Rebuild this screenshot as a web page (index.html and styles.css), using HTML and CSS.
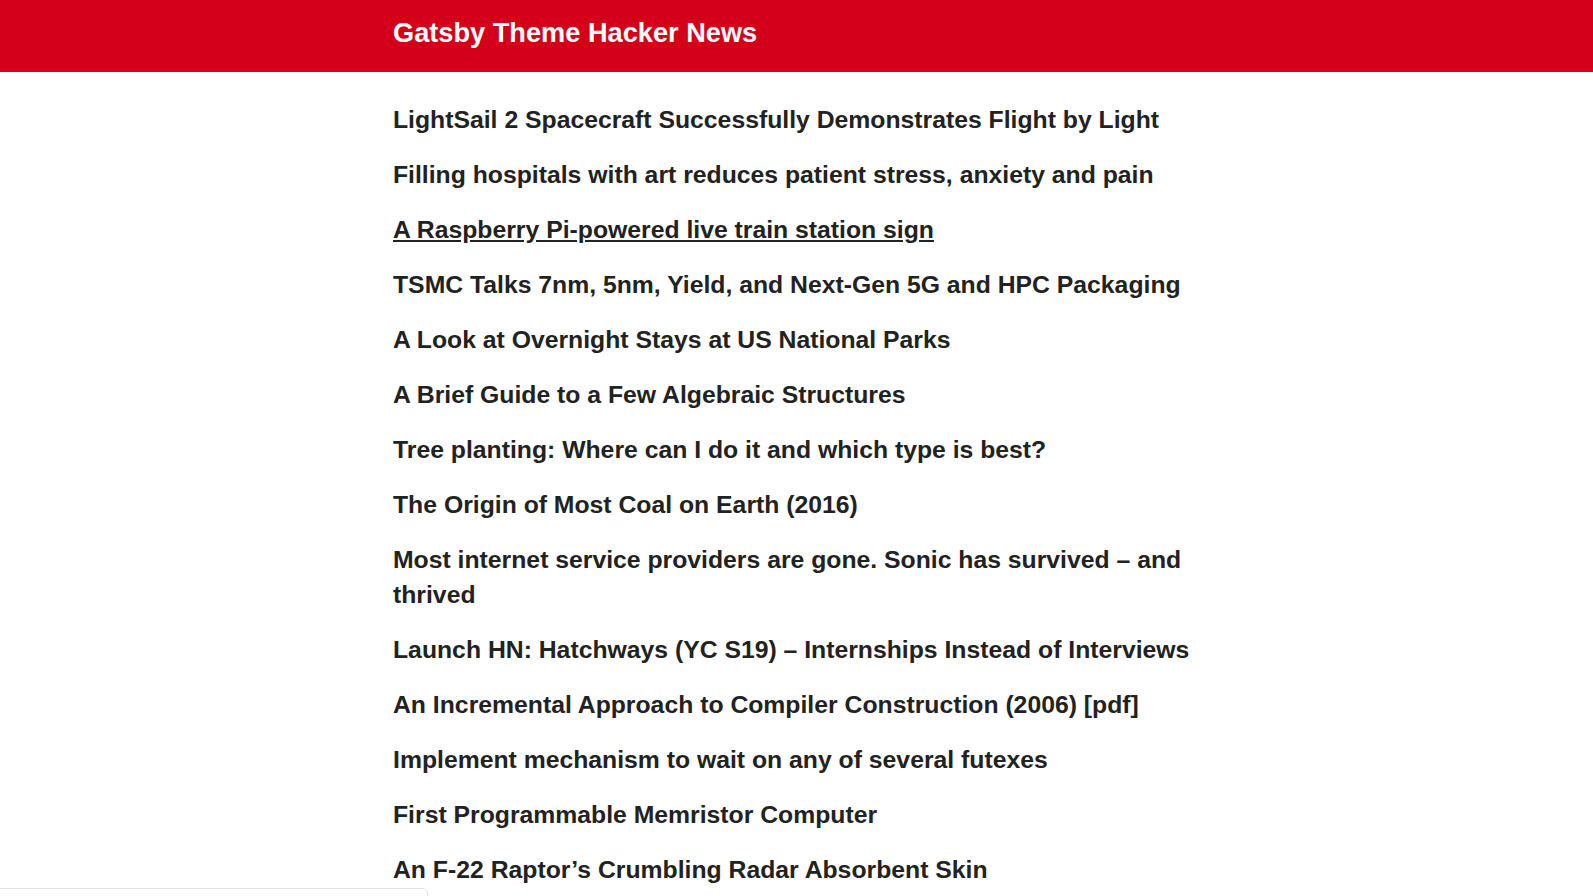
FILE: index.html
```html
<!DOCTYPE html>
<html lang="en">
<head>
<meta charset="utf-8">
<title>Gatsby Theme Hacker News</title>
<link rel="stylesheet" href="styles.css">
</head>
<body>
<header class="site-header">
  <div class="container">
    <a class="site-title" href="#">Gatsby Theme Hacker News</a>
  </div>
</header>
<main class="container">
  <ul class="story-list">
    <li><a href="#">LightSail 2 Spacecraft Successfully Demonstrates Flight by Light</a></li>
    <li><a href="#">Filling hospitals with art reduces patient stress, anxiety and pain</a></li>
    <li><a href="#" class="hovered">A Raspberry Pi-powered live train station sign</a></li>
    <li><a href="#">TSMC Talks 7nm, 5nm, Yield, and Next-Gen 5G and HPC Packaging</a></li>
    <li><a href="#">A Look at Overnight Stays at US National Parks</a></li>
    <li><a href="#">A Brief Guide to a Few Algebraic Structures</a></li>
    <li><a href="#">Tree planting: Where can I do it and which type is best?</a></li>
    <li><a href="#">The Origin of Most Coal on Earth (2016)</a></li>
    <li><a href="#">Most internet service providers are gone. Sonic has survived – and thrived</a></li>
    <li><a href="#">Launch HN: Hatchways (YC S19) – Internships Instead of Interviews</a></li>
    <li><a href="#">An Incremental Approach to Compiler Construction (2006) [pdf]</a></li>
    <li><a href="#">Implement mechanism to wait on any of several futexes</a></li>
    <li><a href="#">First Programmable Memristor Computer</a></li>
    <li><a href="#">An F-22 Raptor’s Crumbling Radar Absorbent Skin</a></li>
  </ul>
</main>
<div class="corner-panel"></div>
</body>
</html>
```

FILE: styles.css
```css
* { box-sizing: border-box; }

html, body {
  margin: 0;
  padding: 0;
  background: #ffffff;
  font-family: "Liberation Sans", Arial, Helvetica, sans-serif;
  color: #222222;
}

body {
  height: 896px;
  overflow: hidden;
}

.container {
  width: 807px;
  margin: 0 auto;
}

.site-header {
  background: #d40019;
  height: 72px;
  padding-top: 17px;
}

.site-title {
  display: block;
  color: #ffffff;
  text-decoration: none;
  font-weight: 700;
  font-size: 27.2px;
  line-height: 31.3px;
}

.story-list {
  list-style: none;
  margin: 31px 0 0 0;
  padding: 0;
  display: flex;
  flex-direction: column;
  gap: 20.53px;
}

.story-list a {
  color: #222222;
  text-decoration: none;
  font-weight: 700;
  font-size: 24.75px;
  line-height: 34.5px;
}

.story-list a.hovered {
  text-decoration: underline;
}

.corner-panel {
  position: fixed;
  left: -1px;
  top: 888px;
  width: 429px;
  height: 40px;
  background: #ffffff;
  border: 1px solid #e2e2e2;
  border-top-right-radius: 6px;
}
```
